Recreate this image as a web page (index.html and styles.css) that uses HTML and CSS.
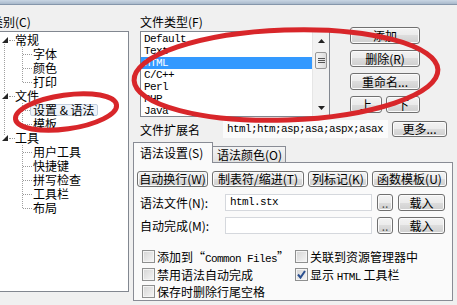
FILE: index.html
```html
<!DOCTYPE html>
<html lang="zh-CN">
<head>
    <meta charset="UTF-8">
    <title>语法设置</title>
    <link rel="stylesheet" href="styles.css">
</head>
<body>
<div class="caption"></div>
<div class="dialog">
    <div class="side">
        <div class="label">类别(C)</div>
        <div class="tree">
            <div class="row root"><span class="toggle"><svg width="6" height="6"><polygon points="6,0 6,6 0,6" fill="#262626"/></svg></span><span class="hline"></span><span>常规</span></div>
            <div class="kids">
                <div class="row"><span class="hline"></span><span>字体</span></div>
                <div class="row"><span class="hline"></span><span>颜色</span></div>
                <div class="row"><span class="hline"></span><span>打印</span></div>
            </div>
            <div class="row root"><span class="toggle"><svg width="6" height="6"><polygon points="6,0 6,6 0,6" fill="#262626"/></svg></span><span class="hline"></span><span>文件</span></div>
            <div class="kids">
                <div class="row"><span class="hline"></span><span class="sel">设置 &amp; 语法</span></div>
                <div class="row"><span class="hline"></span><span>模板</span></div>
            </div>
            <div class="row root"><span class="toggle"><svg width="6" height="6"><polygon points="6,0 6,6 0,6" fill="#262626"/></svg></span><span class="hline"></span><span>工具</span></div>
            <div class="kids">
                <div class="row"><span class="hline"></span><span>用户工具</span></div>
                <div class="row"><span class="hline"></span><span>快捷键</span></div>
                <div class="row"><span class="hline"></span><span>拼写检查</span></div>
                <div class="row"><span class="hline"></span><span>工具栏</span></div>
                <div class="row"><span class="hline"></span><span>布局</span></div>
            </div>
        </div>
    </div>

    <div class="main">
        <div class="types">
            <div class="type-list">
                <div class="label">文件类型(F)</div>
                <div class="listbox">
                    <ul class="items">
                        <li>Default</li>
                        <li>Text</li>
                        <li class="current">HTML</li>
                        <li>C/C++</li>
                        <li>Perl</li>
                        <li>PHP</li>
                        <li>Java</li>
                    </ul>
                    <div class="scrollbar">
                        <div class="arrow"><svg width="7" height="4"><polygon points="0,4 3.5,0 7,4" fill="#222"/></svg></div>
                        <div class="track"><div class="thumb"><span></span><span></span><span></span></div></div>
                        <div class="arrow"><svg width="7" height="4"><polygon points="0,0 3.5,4 7,0" fill="#222"/></svg></div>
                    </div>
                </div>
            </div>
            <div class="type-buttons">
                <button class="btn">添加</button>
                <button class="btn">删除(R)</button>
                <button class="btn">重命名...</button>
                <div class="pair">
                    <button class="btn up">上</button>
                    <button class="btn down">下</button>
                </div>
            </div>
        </div>

        <div class="ext-row">
            <span class="ext-label">文件扩展名</span>
            <span class="ext mono">html;htm;asp;asa;aspx;asax</span>
            <button class="btn more">更多...</button>
        </div>

        <div class="tabs">
            <span class="tab active">语法设置(S)</span>
            <span class="tab">语法颜色(O)</span>
        </div>
        <div class="panel">
            <div class="tool-row">
                <button class="btn w71">自动换行(W)</button>
                <button class="btn w92">制表符/缩进(T)</button>
                <button class="btn w60">列标记(K)</button>
                <button class="btn w75">函数模板(U)</button>
            </div>
            <div class="file-row">
                <span class="file-label">语法文件(N):</span>
                <span class="field mono">html.stx</span>
                <button class="btn dots">..</button>
                <button class="btn load">载入</button>
            </div>
            <div class="file-row second">
                <span class="file-label">自动完成(M):</span>
                <span class="field"></span>
                <button class="btn dots">..</button>
                <button class="btn load">载入</button>
            </div>
            <div class="checks">
                <label class="check"><span class="box"></span><span>添加到“<span class="mono">Common Files</span>”</span></label>
                <label class="check"><span class="box"></span><span>关联到资源管理器中</span></label>
                <label class="check"><span class="box"></span><span>禁用语法自动完成</span></label>
                <label class="check"><span class="box"><svg width="11" height="11"><path d="M2 5.5 L4.5 8.5 L9 2" stroke="#2a4f8f" stroke-width="2" fill="none"/></svg></span><span>显示 <span class="mono">HTML</span> 工具栏</span></label>
                <label class="check"><span class="box"></span><span>保存时删除行尾空格</span></label>
            </div>
        </div>
    </div>
</div>

<!-- red marker circles drawn over the screenshot -->
<svg class="marks" width="457" height="305">
    <ellipse cx="286" cy="75" rx="152" ry="45" transform="rotate(-2 286 75)"/>
    <ellipse cx="66" cy="112" rx="51" ry="17" transform="rotate(-8 66 112)"/>
</svg>
</body>
</html>
```

FILE: styles.css
```css
* {
    box-sizing: border-box;
    margin: 0;
    padding: 0;
    list-style-type: none;
}

body {
    position: relative;
    width: 457px;
    height: 305px;
    overflow: hidden;
    background: #f0f0f0;
    font: 12px "Noto Sans CJK SC", sans-serif;
    color: #000;
}

.mono {
    font-family: "Liberation Mono", monospace;
    font-size: 11px;
    letter-spacing: -0.6px;
}

.caption {
    height: 5px;
    background: linear-gradient(#c9d6e4, #a9b9cb);
    border-bottom: 1px solid #8596ab;
}

.dialog {
    display: flex;
    padding-top: 10px;
}

.label {
    height: 14px;
    line-height: 14px;
    white-space: nowrap;
}

/* left tree */
.side {
    margin-left: -9px;
    width: 138px;
}
.tree {
    margin-top: 2px;
    height: 261px;
    border: 1px solid #828790;
    padding: 1px 0 0 10px;
    background: #fff repeating-linear-gradient(to bottom, #a0a0a0 0 1px, transparent 1px 2px) no-repeat 12px 8px / 1px 98px;
}
.row {
    display: flex;
    align-items: center;
    height: 14px;
    line-height: 14px;
    white-space: nowrap;
}
.toggle {
    width: 7px;
    display: flex;
    align-items: center;
    background: #fff;
}
.hline {
    width: 6px;
    border-top: 1px dotted #9a9a9a;
}
.kids {
    padding-left: 21px;
    background: repeating-linear-gradient(to bottom, #a0a0a0 0 1px, transparent 1px 2px) no-repeat 20px 0 / 1px calc(100% - 7px);
}
.kids .hline {
    width: 9px;
    margin-right: 1px;
}
.sel {
    margin-left: -3px;
    padding: 0 2px;
    height: 12px;
    line-height: 10px;
    border: 1px solid #c3cfde;
    border-radius: 2px;
    background: #eef3fa;
}

/* right side */
.main {
    margin-left: 4px;
    width: 320px;
}
.types {
    display: flex;
    align-items: flex-start;
    padding-left: 7px;
}
.type-list {
    width: 190px;
}
.listbox {
    display: flex;
    margin-top: 2px;
    height: 86px;
    border: 1px solid #828790;
    background: #fff;
    overflow: hidden;
}
.items {
    flex: 1;
    padding-top: 1px;
}
.items li {
    height: 12px;
    line-height: 12px;
    padding-left: 3px;
    font-family: "Liberation Mono", monospace;
    font-size: 11px;
    letter-spacing: -0.6px;
}
.items li.current {
    background: #3399ff;
    color: #fff;
}
.scrollbar {
    width: 17px;
    display: flex;
    flex-direction: column;
    background: #f2f2f2;
    border-left: 1px solid #e6e6e6;
}
.arrow {
    height: 17px;
    display: flex;
    align-items: center;
    justify-content: center;
}
.track {
    flex: 1;
    padding: 3px 2px 0 2px;
}
.thumb {
    height: 17px;
    border: 1px solid #979797;
    border-radius: 2px;
    background: linear-gradient(to right, #f4f4f4, #dcdcdc);
    display: flex;
    flex-direction: column;
    align-items: center;
    justify-content: center;
    gap: 1px;
}
.thumb span {
    width: 7px;
    height: 1px;
    background: #555;
}

.type-buttons {
    margin-left: 20px;
    padding-top: 12px;
    width: 70px;
    display: flex;
    flex-direction: column;
    gap: 6px;
}
.pair {
    display: flex;
    gap: 4px;
}
.up { width: 32px; }
.down { width: 34px; }

.btn {
    height: 17px;
    padding: 0;
    font: inherit;
    line-height: 15px;
    color: #000;
    border: 1px solid #707070;
    border-radius: 3px;
    background: linear-gradient(#f3f3f3 0%, #ebebeb 50%, #dddddd 50%, #cfcfcf 100%);
    box-shadow: inset 0 0 0 1px #fbfbfb;
    white-space: nowrap;
}

.ext-row {
    display: flex;
    align-items: center;
    margin-top: 3px;
    padding-left: 7px;
    height: 18px;
}
.ext-label {
    width: 83px;
}
.ext {
    width: 165px;
    height: 18px;
    line-height: 18px;
    padding-left: 4px;
    background: #fbfbfb;
}
.more {
    margin-left: 4px;
    width: 55px;
    height: 16px;
    line-height: 14px;
}

/* tabs */
.tabs {
    display: flex;
    align-items: flex-end;
    margin-top: 4px;
    height: 20px;
}
.tab {
    height: 16px;
    line-height: 15px;
    width: 74px;
    padding-left: 4px;
    border: 1px solid #898c95;
    border-bottom: none;
    background: linear-gradient(#f4f4f4, #e2e2e2);
    white-space: nowrap;
}
.tab.active {
    width: 80px;
    height: 21px;
    line-height: 19px;
    padding-left: 6px;
    margin-bottom: -1px;
    margin-right: -1px;
    position: relative;
    background: #fafafa;
}
.panel {
    height: 139px;
    border: 1px solid #898c95;
    background: #fafafa;
    padding: 8px 0 0 3px;
}
.tool-row {
    display: flex;
    gap: 4px;
}
.tool-row .btn {
    height: 16px;
    line-height: 14px;
}
.w71 { width: 71px; }
.w92 { width: 92px; }
.w60 { width: 60px; }
.w75 { width: 75px; }

.file-row {
    display: flex;
    align-items: center;
    margin-top: 7px;
    padding-left: 3px;
    height: 17px;
}
.file-row.second {
    margin-top: 6px;
}
.file-label {
    width: 85px;
}
.field {
    width: 147px;
    height: 17px;
    line-height: 15px;
    padding-left: 4px;
    border: 1px solid #d5d8dd;
    background: #fff;
}
.dots {
    margin-left: 5px;
    width: 16px;
    color: #555;
}
.load {
    margin-left: 5px;
    width: 47px;
}

.checks {
    display: grid;
    grid-template-columns: 153px 1fr;
    grid-auto-rows: 17.5px;
    margin-top: 14px;
    padding-left: 5px;
}
.check {
    display: flex;
    align-items: center;
    white-space: nowrap;
}
.box {
    width: 13px;
    height: 13px;
    margin-right: 2px;
    border: 1px solid #8e8f8f;
    background: linear-gradient(135deg, #d4d4d4, #f6f6f6);
    box-shadow: inset 0 0 0 1px #f4f4f4;
    display: flex;
    align-items: center;
    justify-content: center;
}

.marks {
    position: absolute;
    top: 0;
    left: 0;
    pointer-events: none;
}
.marks ellipse {
    fill: none;
    stroke: #d8262a;
    stroke-width: 5;
}
```
